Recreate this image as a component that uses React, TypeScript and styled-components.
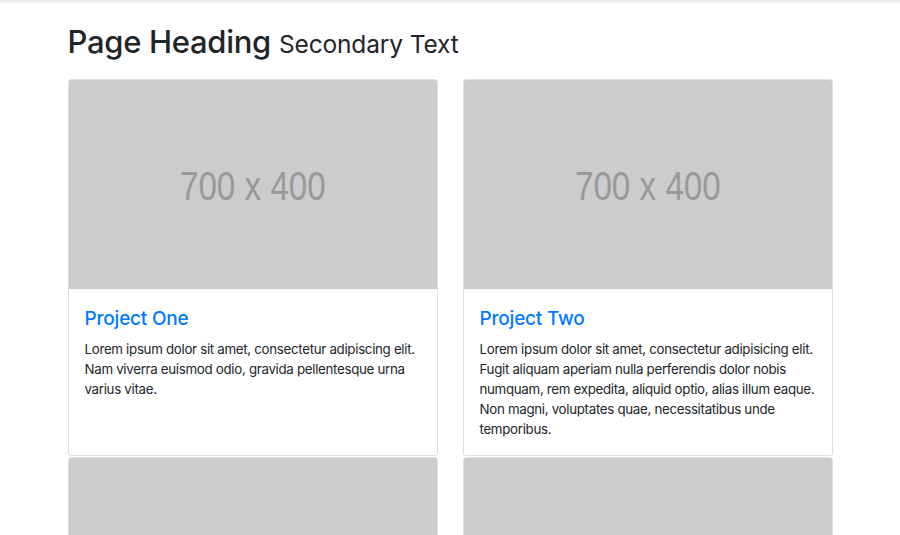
import styled, { createGlobalStyle } from "styled-components";

const GlobalStyle = createGlobalStyle`
    html, body {
        margin: 0;
        padding: 0;
        background: #fff;
    }
    body {
        font-family: Inter, "Liberation Sans", Arial, sans-serif;
        color: #212529;
    }
`;

const TopShadow = styled.div`
    height: 4px;
    background: linear-gradient(#e4e4e4, #fff);
`;

const Container = styled.div`
    width: 765px;
    margin: 0 auto;
    padding-top: 19px;
`;

const Heading = styled.h1`
    margin: 0 0 19px;
    font-size: 31px;
    font-weight: 500;
    line-height: 1.2;
    letter-spacing: -0.3px;
    color: #212529;
`;

const Secondary = styled.small`
    font-size: 24.5px;
    font-weight: 400;
    letter-spacing: -0.15px;
`;

const Grid = styled.div`
    display: grid;
    grid-template-columns: 370px 370px;
    column-gap: 25px;
    row-gap: 1px;
`;

const Card = styled.div`
    display: flex;
    flex-direction: column;
    border: 1px solid #dfdfdf;
    border-radius: 3px;
    overflow: hidden;
    background: #fff;
`;

const Placeholder = styled.div`
    height: 210px;
    margin: -1px -1px 0;
    background: #ccc;
    display: flex;
    align-items: center;
    justify-content: center;
    padding-top: 5px;
    box-sizing: border-box;
`;

const PlaceholderLabel = styled.span`
    display: inline-block;
    font-family: "Liberation Sans", Arial, sans-serif;
    font-size: 40px;
    color: #999;
    transform: scaleX(0.83);
`;

const CardBody = styled.div`
    padding: 18px 16px 16px;
`;

const Title = styled.h4`
    margin: 0 0 8px;
    font-size: 19px;
    font-weight: 500;
    line-height: 24px;
    letter-spacing: -0.2px;
`;

const TitleLink = styled.a`
    color: #007bff;
    text-decoration: none;
`;

const Text = styled.p`
    margin: 0;
    font-size: 13.3px;
    line-height: 20px;
    letter-spacing: -0.3px;
`;

const projects = [
    {
        title: "Project One",
        text: "Lorem ipsum dolor sit amet, consectetur adipiscing elit. Nam viverra euismod odio, gravida pellentesque urna varius vitae.",
    },
    {
        title: "Project Two",
        text: "Lorem ipsum dolor sit amet, consectetur adipisicing elit. Fugit aliquam aperiam nulla perferendis dolor nobis numquam, rem expedita, aliquid optio, alias illum eaque. Non magni, voluptates quae, necessitatibus unde temporibus.",
    },
    {
        title: "Project Three",
        text: "Lorem ipsum dolor sit amet, consectetur adipiscing elit. Nam viverra euismod odio, gravida pellentesque urna varius vitae.",
    },
    {
        title: "Project Four",
        text: "Lorem ipsum dolor sit amet, consectetur adipisicing elit. Fugit aliquam aperiam nulla perferendis dolor nobis numquam.",
    },
];

export default function App() {
    return (
        <>
            <GlobalStyle />
            <TopShadow />
            <Container>
                <Heading>
                    Page Heading <Secondary>Secondary Text</Secondary>
                </Heading>
                <Grid>
                    {projects.map((project, i) => (
                        <Card key={i}>
                            <Placeholder>
                                <PlaceholderLabel>700 x 400</PlaceholderLabel>
                            </Placeholder>
                            <CardBody>
                                <Title>
                                    <TitleLink href="#">{project.title}</TitleLink>
                                </Title>
                                <Text>{project.text}</Text>
                            </CardBody>
                        </Card>
                    ))}
                </Grid>
            </Container>
        </>
    );
}
